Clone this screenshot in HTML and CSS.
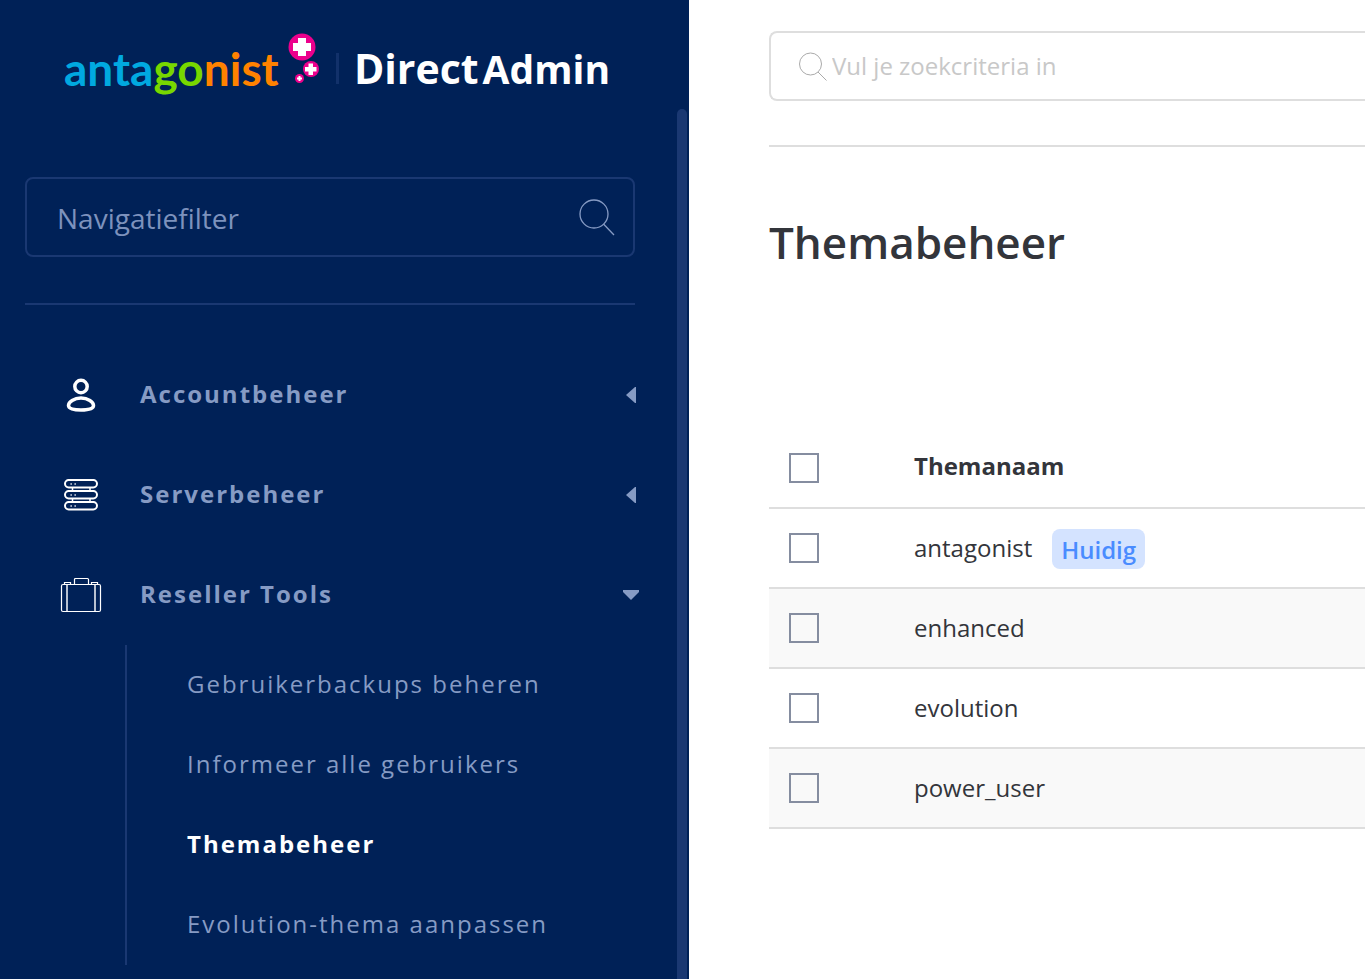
FILE: index.html
```html
<!DOCTYPE html>
<html lang="nl">
  <head>
    <meta charset="utf-8">
    <title>Themabeheer - DirectAdmin</title>
    <link rel="stylesheet" href="styles.css">
  </head>

  <body>
    <aside class="sidebar">
      <a class="logo" href="#">
        <span class="logo-brand"><span class="blue">anta</span><span class="green">go</span><span class="orange">nist</span></span>
        <svg class="logo-bubbles" width="32" height="52" viewBox="0 0 32 52" aria-hidden="true">
          <g fill="#ec008c">
            <circle cx="14" cy="14" r="13.5" />
            <circle cx="23" cy="36" r="8" />
            <circle cx="11.5" cy="45.5" r="4.5" />
          </g>
          <g fill="#fff">
            <path d="M10 5h8v5h5v8h-5v5h-8v-5H5v-8h5z" />
            <path d="M20.500 30.500h4.500v3.500h3.500v4.500H25V42h-4.500v-3.500H17V34h3.500z" />
            <path d="M10.500 43h2v1.500H14v2h-1.500V48h-2v-1.500H9v-2h1.500z" />
          </g>
        </svg>
        <span class="logo-divider"></span>
        <span class="logo-product">Direct<small>Admin</small></span>
      </a>

      <div class="sidebar-body">
        <div class="sidebar-content">
          <div class="nav-filter">
            <input type="text" placeholder="Navigatiefilter" aria-label="Navigatiefilter">
            <svg width="36" height="38" viewBox="0 0 36 38" fill="none" stroke="currentColor" stroke-width="1.3">
              <circle cx="15" cy="16" r="14" />
              <path d="M24.500 26l10.500 11" />
            </svg>
          </div>

          <nav>
            <ul class="menu">
              <li>
                <a class="menu-item" href="#">
                  <svg class="menu-icon" width="42" height="36" viewBox="0 0 42 36" fill="none" stroke="#fff" stroke-width="3.5">
                    <circle cx="21" cy="9.5" r="6.2" />
                    <path d="M21 21c7 0 12.500 4 12.500 7.500 0 3-5 4.500-12.500 4.500S8.500 31.500 8.500 28.500c0-3.500 5.500-7.500 12.500-7.500z" />
                  </svg>
                  <span>Accountbeheer</span>
                  <svg class="arrow" width="18" height="18" viewBox="0 0 18 18"><path d="M4 9l9-8h1v16h-1z" /></svg>
                </a>
              </li>
              <li>
                <a class="menu-item" href="#">
                  <svg class="menu-icon" width="42" height="36" viewBox="0 0 42 36" fill="none" stroke="#fff" stroke-width="2">
                    <rect x="5" y="3" width="32" height="7.5" rx="3.7" />
                    <rect x="5" y="14" width="32" height="7.5" rx="3.7" />
                    <rect x="5" y="25" width="32" height="7.5" rx="3.7" />
                    <path stroke-width="1.5" d="M12.500 10v4M30 10v4M12.500 21v4M30 21v4" />
                    <path stroke-width="1.3" d="M10.500 7h1.300M14.500 7h1.300M10.500 18h1.300M14.500 18h1.300M10.500 29h1.300M14.500 29h1.300" />
                  </svg>
                  <span>Serverbeheer</span>
                  <svg class="arrow" width="18" height="18" viewBox="0 0 18 18"><path d="M4 9l9-8h1v16h-1z" /></svg>
                </a>
              </li>
              <li>
                <a class="menu-item" href="#">
                  <svg class="menu-icon" width="42" height="36" viewBox="0 0 42 36" fill="none" stroke="#fff" stroke-width="1.2">
                    <rect x="1.5" y="7.5" width="39" height="27" rx="1.5" />
                    <path d="M14.500 7.500v-5q0-1 1-1h12q1 0 1 1v5M4.500 7.500v-2h6v2M31.500 7.500v-2h6v2" />
                    <path stroke-width="1.8" opacity=".8" d="M7 7.500v27M35 7.500v27" />
                  </svg>
                  <span>Reseller Tools</span>
                  <svg class="arrow" width="18" height="18" viewBox="0 0 18 18"><path d="M9 14L1 6V4h16v2z" /></svg>
                </a>
                <ul class="submenu">
                  <li><a href="#">Gebruikerbackups beheren</a></li>
                  <li><a href="#">Informeer alle gebruikers</a></li>
                  <li><a class="active" href="#">Themabeheer</a></li>
                  <li><a href="#">Evolution-thema aanpassen</a></li>
                </ul>
              </li>
            </ul>
          </nav>
        </div>
        <div class="scroll-thumb"></div>
      </div>
    </aside>

    <main>
      <header class="search-bar">
        <label class="search">
          <svg width="28" height="30" viewBox="0 0 28 30" fill="none" stroke="currentColor">
            <circle cx="11.5" cy="13" r="11" />
            <path d="M19 21l8.500 8.500" />
          </svg>
          <input type="text" placeholder="Vul je zoekcriteria in" aria-label="Zoeken">
        </label>
      </header>

      <h1>Themabeheer</h1>

      <table>
        <thead>
          <tr>
            <th class="check"><input type="checkbox" aria-label="Alles selecteren"></th>
            <th>Themanaam</th>
          </tr>
        </thead>
        <tbody>
          <tr>
            <td class="check"><input type="checkbox" aria-label="antagonist"></td>
            <td><div class="name">antagonist <span class="badge">Huidig</span></div></td>
          </tr>
          <tr>
            <td class="check"><input type="checkbox" aria-label="enhanced"></td>
            <td>enhanced</td>
          </tr>
          <tr>
            <td class="check"><input type="checkbox" aria-label="evolution"></td>
            <td>evolution</td>
          </tr>
          <tr>
            <td class="check"><input type="checkbox" aria-label="power_user"></td>
            <td>power_user</td>
          </tr>
        </tbody>
      </table>
    </main>
  </body>
</html>
```
FILE: styles.css
```css
* {
  box-sizing: border-box;
}

body {
  display: grid;
  grid-template-columns: 689px 1fr;
  min-height: 100vh;
  margin: 0;
  font: 24px/32px "Open Sans", sans-serif;
  color: #33353b;
  background: #fff;
}

a {
  color: inherit;
  text-decoration: none;
}

ul {
  list-style: none;
  padding: 0;
  margin: 0;
}

svg {
  display: block;
  flex: none;
}

input {
  font: inherit;
  color: inherit;
}

/* Sidebar */
.sidebar {
  display: flex;
  flex-direction: column;
  color: #869bc4;
  background: #002157;
}

.logo {
  display: flex;
  align-items: flex-end;
  height: 109px;
  padding: 0 0 10px 64px;
  font-weight: bold;
  line-height: 60px;
}

.logo-brand {
  width: 224px;
  font-family: Lato, sans-serif;
  font-size: 46px;
}

.blue {
  color: #00a9e0;
}

.green {
  color: #78d700;
}

.orange {
  color: #ff8200;
}

.logo-bubbles {
  margin-bottom: 14px;
}

.logo-divider {
  width: 3px;
  height: 31px;
  margin: 0 15px 15px 16px;
  background: #12316a;
}

.logo-product {
  color: #fff;
  font-size: 41px;
}

.logo-product small {
  margin-left: 4px;
  font-size: 39px;
}

.sidebar-body {
  display: flex;
  flex: 1;
  padding: 0 2px 0 25px;
}

.sidebar-content {
  flex: 1;
  padding: 68px 42px 0 0;
}

.scroll-thumb {
  width: 10px;
  background: #1a3872;
  border-radius: 5px 5px 0 0;
}

.nav-filter {
  display: flex;
  align-items: center;
  height: 80px;
  padding: 0 18px 0 30px;
  border: 2px solid #1a3872;
  border-radius: 8px;
}

.nav-filter input {
  flex: 1;
  min-width: 0;
  height: 44px;
  padding: 2px 0 0;
  border: 0;
  outline: 0;
  background: none;
  font-size: 28px;
  line-height: 40px;
}

.nav-filter input::placeholder {
  color: #7d92bd;
}

nav {
  margin-top: 46px;
  padding-top: 40px;
  border-top: 2px solid #1a3872;
  letter-spacing: 2px;
}

.menu-item {
  display: flex;
  align-items: center;
  height: 100px;
  padding-left: 35px;
  font-weight: bold;
}

.menu-item span {
  padding-bottom: 2px;
}

.menu-icon {
  margin-right: 38px;
}

.arrow {
  margin: 0 -5px 0 auto;
  fill: currentColor;
}

.submenu {
  margin-left: 100px;
  border-left: 2px solid #1a3872;
}

.submenu a {
  display: block;
  padding: 23px 0 25px 60px;
}

.submenu .active {
  color: #fff;
  font-weight: bold;
}

/* Content */
main {
  padding: 31px 0 0 80px;
}

.search-bar {
  padding-bottom: 44px;
  border-bottom: 2px solid #dedede;
}

.search {
  display: flex;
  align-items: center;
  gap: 5px;
  height: 70px;
  padding-left: 28px;
  border: 2px solid #dedede;
  border-right: 0;
  border-radius: 8px 0 0 8px;
  color: #aaa;
}

.search input {
  flex: 1;
  min-width: 0;
  padding: 0;
  border: 0;
  outline: 0;
  background: none;
}

.search input::placeholder {
  color: #c8c8c8;
}

h1 {
  margin: 65px 0 157px;
  font-size: 44px;
  font-weight: 600;
  line-height: 60px;
}

table {
  width: 100%;
  border-collapse: separate;
  border-spacing: 0;
}

th,
td {
  height: 80px;
  padding: 0;
  text-align: left;
  border-bottom: 2px solid #dedede;
}

th {
  padding-bottom: 4px;
}

tbody tr:nth-child(even) {
  background: #f9f9f9;
}

.check {
  width: 145px;
  padding: 0 0 0 20px;
}

.check input {
  display: block;
  appearance: none;
  width: 30px;
  height: 30px;
  margin: 0;
  border: 2px solid #858da0;
  background: #fff;
}

tbody .check input {
  background: none;
}

.name {
  display: flex;
  align-items: center;
  gap: 20px;
}

.badge {
  margin-top: 2px;
  padding: 5px 9px 3px;
  border-radius: 8px;
  color: #4a8cff;
  background: #d4e3ff;
  font-weight: 600;
}
```
